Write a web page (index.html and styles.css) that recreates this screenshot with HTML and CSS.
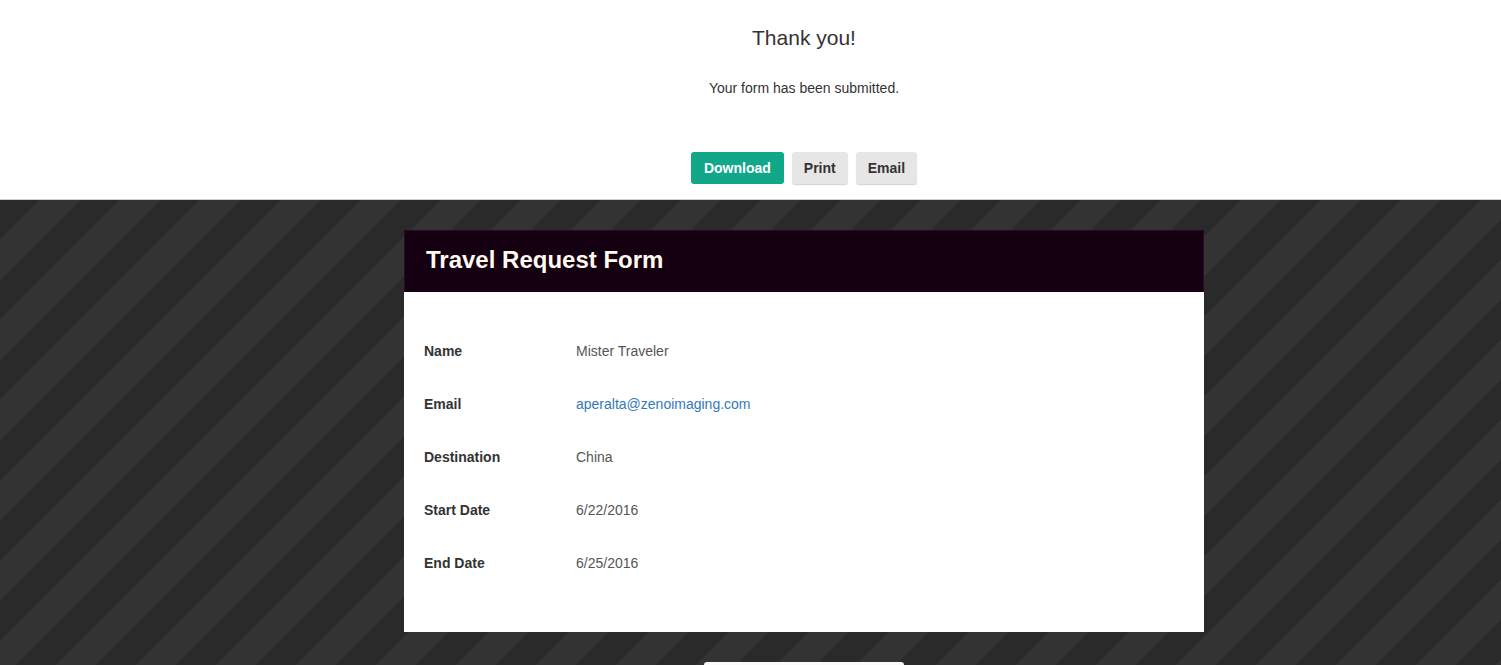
FILE: index.html
```html
<!DOCTYPE html>
<html>
<head>
<meta charset="utf-8">
<link rel="stylesheet" href="styles.css">
</head>
<body>
<div class="top">
  <div class="col">
    <h1 class="thanks">Thank you!</h1>
    <p class="sub">Your form has been submitted.</p>
    <div class="actions">
      <button class="btn btn-primary">Download</button>
      <button class="btn">Print</button>
      <button class="btn">Email</button>
    </div>
  </div>
</div>
<div class="stage">
  <div class="col">
    <div class="card">
      <div class="card-head">Travel Request Form</div>
      <div class="card-body">
        <div class="row"><div class="label">Name</div><div class="value">Mister Traveler</div></div>
        <div class="row"><div class="label">Email</div><div class="value"><a class="link" href="#">aperalta@zenoimaging.com</a></div></div>
        <div class="row"><div class="label">Destination</div><div class="value">China</div></div>
        <div class="row"><div class="label">Start Date</div><div class="value">6/22/2016</div></div>
        <div class="row"><div class="label">End Date</div><div class="value">6/25/2016</div></div>
      </div>
    </div>
    <div class="footer-box"></div>
  </div>
</div>
</body>
</html>
```
FILE: styles.css
```css
html, body {
  margin: 0;
  padding: 0;
  height: 100%;
  overflow: hidden;
}
body {
  font-family: "Liberation Sans", Arial, sans-serif;
  color: #333;
  background: #2a2a2a;
}
.col {
  padding-left: 107px;
  display: flex;
  flex-direction: column;
  align-items: center;
}
.top {
  background: #fff;
  border-bottom: 1px solid #cfcfcf;
  box-sizing: border-box;
  height: 200px;
}
.thanks {
  margin: 0;
  padding-top: 26px;
  font-size: 21px;
  line-height: 24px;
  font-weight: normal;
  color: #333;
}
.sub {
  margin: 28px 0 0;
  font-size: 14px;
  line-height: 20px;
  color: #333;
}
.actions {
  margin-top: 54px;
  display: flex;
  gap: 8px;
}
.btn {
  font-family: "Liberation Sans", Arial, sans-serif;
  font-size: 14px;
  font-weight: bold;
  height: 32px;
  padding: 0 12px;
  border: 0;
  border-radius: 3px;
  background: #e6e6e6;
  color: #333;
  box-shadow: 0 1px 1px rgba(0,0,0,0.18);
}
.btn-primary {
  background: #11a889;
  color: #fff;
  padding: 0 13px;
  box-shadow: none;
}
.stage {
  height: 465px;
  overflow: hidden;
  background-color: #2a2a2a;
  background-image: repeating-linear-gradient(135deg, #2a2a2a 0, #2a2a2a 28.28px, #333 28.28px, #333 56.57px);
}
.card {
  margin-top: 30px;
  width: 800px;
  background: #fff;
}
.card-head {
  height: 62px;
  box-sizing: border-box;
  background: #150011;
  border: 1px solid #2a0a26;
  border-bottom: 0;
  padding: 0 0 4px 21px;
  display: flex;
  align-items: center;
  font-size: 24px;
  font-weight: bold;
  color: #fffaf0;
}
.card-body {
  padding: 32px 20px 43px;
}
.row {
  display: flex;
  height: 53px;
  align-items: center;
  font-size: 14px;
}
.label {
  width: 152px;
  font-weight: bold;
  color: #333;
}
.value {
  color: #555;
}
.link {
  color: #337ab7;
  text-decoration: none;
}
.footer-box {
  margin-top: 30px;
  width: 200px;
  height: 10px;
  background: #fafafa;
  border-radius: 3px 3px 0 0;
}
```
